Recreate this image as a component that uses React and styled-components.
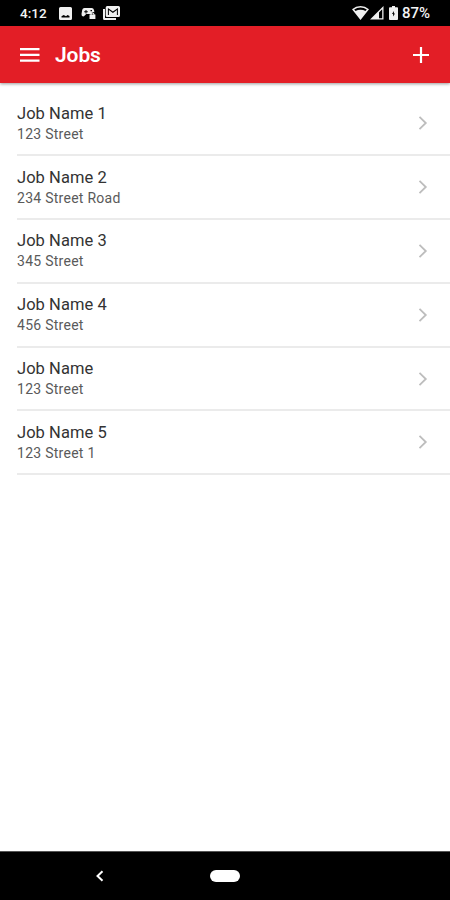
import styled, { createGlobalStyle } from "styled-components";

const GlobalStyle = createGlobalStyle`
  *{ box-sizing:border-box; }
  body{
    margin:0; background-color:#fff;
    font-family: Roboto, "Noto Sans", sans-serif;
  }
`;

const Screen = styled.div`
  display:flex; flex-direction: column;
  width:100%; height:100vh; overflow:hidden;
`;

const StatusBar = styled.div`
  display:flex; justify-content: space-between;
  height:25.5px; flex:none;
  padding: 0 19px 0 20px;
  background-color:#000; color:#f4f4f4;
`;

const StatusGroup = styled.div`
  display:flex; align-items: center;
  height:26px;
`;

const StatusText = styled.span`
  width: ${(props) => props.$width}px;
  font-size: ${(props) => props.$size}px; font-weight:500; line-height:26px;
  white-space: nowrap;
`;

const StatusIcon = styled.svg`
  display:block; flex:none;
  margin-left: ${(props) => props.$gap || 0}px;
  margin-right: ${(props) => props.$after || 0}px;
  fill:#f0f0f0;
`;

const Header = styled.header`
  display:flex; align-items: center;
  height:57.5px; flex:none;
  padding: 0 21px 0 20px;
  background-color:#e31e26; color:#fff;
  box-shadow: 0 1px 3px rgba(0,0,0,0.4);
`;

const Title = styled.h1`
  flex:1; margin:0 0 0 15px; padding-top:1px;
  font-size:21px; font-weight:600; line-height:26px; letter-spacing:-0.1px;
`;

const IconButton = styled.button`
  display:flex; padding:1px 0 0; border:0;
  background:none; color:#fff; cursor: pointer;
`;

const List = styled.ul`
  flex:1; margin:0; padding: 9.5px 0 0 17px;
  list-style:none;
`;

const Row = styled.li`
  display:flex; align-items: center; justify-content: space-between;
  height:63.8px; padding-right:22px;
  border-bottom:2px solid #ebebeb;
`;

const JobName = styled.div`
  font-size:16.5px; line-height:21px; letter-spacing:0.05px; color:#333;
`;

const JobAddress = styled.div`
  font-size:14px; line-height:20px; letter-spacing:0.27px; color:#5a5a5a;
`;

const Chevron = styled.svg`
  display:block; fill:none; stroke:#bdbdbd; stroke-width:1.8;
`;

const NavBar = styled.nav`
  display:flex; align-items: center;
  height:49px; flex:none;
  padding-left:95px;
  background-color:#000;
  border-top:1px solid #555;
`;

const HomePill = styled.span`
  width:30px; height:12px; margin-left:106px;
  border-radius:6px; background-color:#fff;
`;

const jobs = [
  { name: "Job Name 1", address: "123 Street" },
  { name: "Job Name 2", address: "234 Street Road" },
  { name: "Job Name 3", address: "345 Street" },
  { name: "Job Name 4", address: "456 Street" },
  { name: "Job Name", address: "123 Street" },
  { name: "Job Name 5", address: "123 Street 1" },
];

function Status(){
  return <StatusBar>
    <StatusGroup>
      <StatusText $width={27} $size={13.5}>4:12</StatusText>
      {/* picture */}
      <StatusIcon $gap={12} width="13" height="13" viewBox="0 0 13 13">
        <path fillRule="evenodd" d="M1.500 0h10Q13 0 13 1.500v10Q13 13 11.500 13h-10Q0 13 0 11.500v-10Q0 0 1.500 0zM2.500 10.500h8V9L8.600 8 7 9.300 4.700 8 2.500 9.300z"/>
      </StatusIcon>
      {/* controller with a lock */}
      <StatusIcon $gap={9} width="15" height="12" viewBox="0 0 15 12">
        <path fillRule="evenodd" d="M3.500 1h7.200q1.800 0 2.300 2l.4 2.200q-2.400-.8-3.400 1.800H5.200L3 9.300Q.3 10 .5 7L1.200 3Q1.600 1 3.500 1zM3.200 4.200v1h1.300v1.200h1V5.200h1.300v-1H5.500V3h-1v1.200zM9.500 3v1.300h1.500V3z"/>
        <path fillRule="evenodd" d="M8.500 7.500h1Q9.700 5.500 11.500 5.500t2 2h.9V12H8.500zM10.500 7.500h2q-.1-1-1-1t-1 1z"/>
      </StatusIcon>
      {/* stacked mail */}
      <StatusIcon $gap={7} width="17" height="14" viewBox="0 0 17 14">
        <path d="M0 3h2v9h11v2H1.500Q0 14 0 12.500z"/>
        <path fillRule="evenodd" d="M4.200 0h11.300Q17 0 17 1.500v8Q17 11 15.500 11H4.200Q2.700 11 2.700 9.500v-8Q2.700 0 4.200 0zM4.900 2V9h1V3.900L9.900 6.900l4-3V9h1V2L9.900 5.500z"/>
      </StatusIcon>
    </StatusGroup>
    <StatusGroup>
      {/* wifi */}
      <StatusIcon width="17" height="14" viewBox="0 0 17 14">
        <path fillRule="evenodd" d="M8.500 0Q13 0 17 3.300L8.500 14 0 3.300Q4 0 8.500 0zM8.500 1.500Q5 1.500 2.200 3.500l1.300 1.600Q5.800 3.700 8.500 3.700t5 1.400l1.300-1.600Q12 1.500 8.500 1.500z"/>
      </StatusIcon>
      {/* signal */}
      <StatusIcon $gap={1} width="14" height="14" viewBox="0 0 14 14">
        <path fillRule="evenodd" d="M13.500 0v13.500H0zM12.200 3.200L9 6.400v5.800h3.200z"/>
      </StatusIcon>
      {/* battery */}
      <StatusIcon $gap={5} $after={4} width="9" height="14" viewBox="0 0 9 14">
        <path fillRule="evenodd" d="M3 0h3v1.300h2.200Q9 1.300 9 2.200v10.900q0 .9-.9.900H.9Q0 14 0 13.100V2.200q0-.9.900-.9H3zM4.900 5L3 8h1.100v2.400L6 7.400H4.900z"/>
      </StatusIcon>
      <StatusText $width={29} $size={15}>87%</StatusText>
    </StatusGroup>
  </StatusBar>
}

function App(){
  return <Screen>
    <GlobalStyle/>
    <Status/>
    <Header>
      <IconButton aria-label="Menu">
        <svg width="20" height="14" viewBox="0 0 20 14" fill="currentColor">
          <path d="M0 0h19.500v2.200H0zM0 5.800h19.500V8H0zM0 11.600h19.500v2.200H0z"/>
        </svg>
      </IconButton>
      <Title>Jobs</Title>
      <IconButton aria-label="Add job">
        <svg width="16" height="16" viewBox="0 0 16 16" fill="none" stroke="currentColor" strokeWidth="2.2">
          <path d="M8 0v16M0 8h16"/>
        </svg>
      </IconButton>
    </Header>
    <List>
      {jobs.map((job, i) => (
        <Row key={i}>
          <div>
            <JobName>{job.name}</JobName>
            <JobAddress>{job.address}</JobAddress>
          </div>
          <Chevron width="10" height="14" viewBox="0 0 10 14">
            <path d="M1.500 .8L7.800 7l-6.300 6.200"/>
          </Chevron>
        </Row>
      ))}
    </List>
    <NavBar>
      <svg width="9" height="12" viewBox="0 0 9 12" fill="none" stroke="#fff" strokeWidth="2">
        <path d="M7.500 1.200L2.500 6l5 4.800"/>
      </svg>
      <HomePill/>
    </NavBar>
  </Screen>
}

export default App;
